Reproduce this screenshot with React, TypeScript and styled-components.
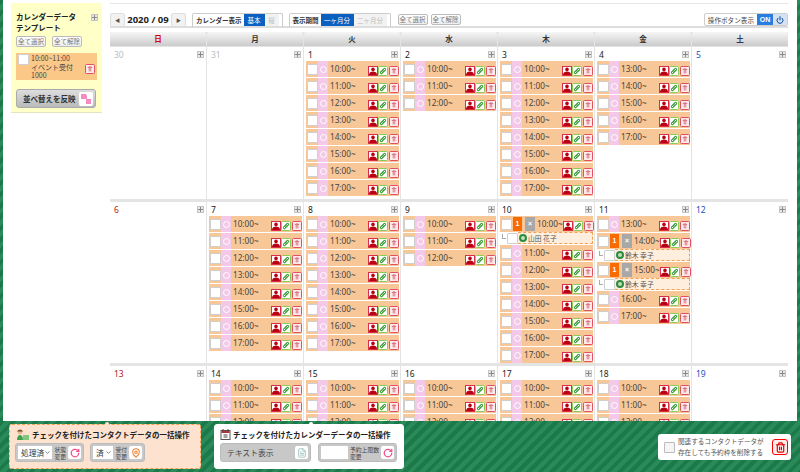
import React from "react";
import styled, { createGlobalStyle } from "styled-components";
import { ChevronDown, FileText, MapPin, Power, RotateCw, Trash2 } from "lucide-react";

const JP = `"Noto Sans CJK JP", "Noto Sans", sans-serif`;

const Global = createGlobalStyle`
  html, body {
    margin: 0;
    height: 472px;
    overflow: hidden;
    font-family: ${JP};
    color: #333;
  }
  * { box-sizing: border-box; }
`;

const Page = styled.div`
  position: relative;
  width: 800px;
  height: 472px;
  overflow: hidden;
  padding: 0 3px;
  background: repeating-linear-gradient(135deg, #1c7a4a 0 4px, #2b8a5a 4px 8px);
`;
const Main = styled.div`
  display: flex;
  align-items: flex-start;
  gap: 8px;
  height: 421px;
  overflow: hidden;
  padding: 3px 10px 0 8px;
  background: #fff;
`;

/* sidebar */
const Side = styled.aside`
  flex: 0 0 90px;
  height: 110px;
  padding: 8px 5px 0;
  background: #ffffc8;
  border-bottom: 1px solid #e4e4c0;
  position: relative;
`;
const SideTitle = styled.div`
  font-size: 7.5px;
  font-weight: 700;
  line-height: 11px;
  color: #222;
  white-space: nowrap;
`;
const SideButtons = styled.div`
  display: flex;
  gap: 6px;
  margin-top: 3px;
`;
const SmallButton = styled.button`
  width: 30px;
  height: 11px;
  padding: 0;
  border: 1px solid #bbb;
  border-radius: 2px;
  background: linear-gradient(#fff, #eee);
  color: #777;
  font: 6.5px/9px ${JP};
`;
const Template = styled.div`
  display: flex;
  gap: 2px;
  margin: 6px 0 0;
  width: 81px;
  height: 27px;
  padding: 1px;
  background: #fcc888;
  position: relative;
`;
const TemplateText = styled.div`
  font-size: 7px;
  line-height: 8.5px;
  white-space: nowrap;
  color: #444;
`;
const TemplateTrash = styled.span`
  position: absolute;
  top: 2px;
  right: 2px;
`;
const Reflect = styled.div`
  display: flex;
  align-items: center;
  justify-content: space-between;
  width: 80px;
  height: 19px;
  margin-top: 9px;
  padding: 0 2px 0 6px;
  border: 1px solid #aaa;
  border-radius: 3px;
  background: linear-gradient(#ddd, #bbb);
  font-size: 7.5px;
  font-weight: 700;
  color: #333;
`;
const ReflectIcon = styled.span`
  display: flex;
  align-items: center;
  justify-content: center;
  width: 14px;
  height: 14px;
  border-radius: 2px;
  background: #fff;
`;
const Plus = styled.span`
  display: inline-block;
  width: 7px;
  height: 7px;
  border: 1px solid #c4c4c4;
  background: linear-gradient(#888, #888) center/5px 1px no-repeat,
    linear-gradient(#888, #888) center/1px 5px no-repeat, #e8e8e8;
  flex: none;
`;
const SidePlus = styled(Plus)`
  position: absolute;
  top: 11px;
  right: 4px;
`;

/* calendar */
const Calendar = styled.main`
  width: 678px;
  flex: none;
  border-top: 1px solid #e6e6e6;
`;
const Toolbar = styled.div`
  display: flex;
  align-items: center;
  height: 24px;
  padding-top: 9px;
  border-bottom: 2px solid #ddd;
`;
const NavBox = styled.span`
  display: flex;
  align-items: center;
  justify-content: center;
  width: 15px;
  height: 14px;
  border: 1px solid #ddd;
  border-radius: 2px;
  background: #f2f2f2;
  color: #555;
  font-size: 5px;
`;
const Month = styled.span`
  width: 46px;
  text-align: center;
  font: 700 9.5px/14px "Noto Sans", sans-serif;
  color: #222;
  white-space: nowrap;
`;
const Group = styled.div`
  display: flex;
  align-items: center;
  gap: 2px;
  height: 14px;
  margin-left: 6px;
  padding: 0 3px;
  border: 1px solid #ccc;
  border-bottom: 0;
  border-radius: 2px 2px 0 0;
  font-size: 6.5px;
  font-weight: 700;
  color: #333;
  white-space: nowrap;
`;
const Seg = styled.span<{ $on?: boolean; $w: number }>`
  width: ${(p) => p.$w}px;
  height: 12px;
  text-align: center;
  font: 400 6.5px/12px ${JP};
  color: ${(p) => (p.$on ? "#fff" : "#bbb")};
  background: ${(p) => (p.$on ? "#0a60c0" : "#f2f2f2")};
`;
const Segs = styled.div`
  display: flex;
`;
const ToolButtons = styled.div`
  display: flex;
  gap: 3px;
  margin-left: 7px;
`;
const Toggle = styled.div`
  display: flex;
  align-items: center;
  height: 13px;
  margin-left: auto;
  padding-left: 3px;
  border: 1px solid #ccc;
  border-radius: 2px;
  font-size: 6.6px;
  color: #444;
  white-space: nowrap;
`;
const ToggleOn = styled.span`
  width: 16px;
  height: 11px;
  margin-left: 3px;
  text-align: center;
  background: #2a7de0;
  color: #fff;
  font: 700 7px/11px "Liberation Sans", sans-serif;
`;
const TogglePower = styled.span`
  display: flex;
  align-items: center;
  justify-content: center;
  width: 14px;
  height: 11px;
  background: #d5e2f2;
  color: #0a50a0;
`;
const Grid = styled.div`
  display: grid;
  grid-template-columns: repeat(7, 96px);
  grid-template-rows: 15px 149px 161px auto;
  column-gap: 1px;
  row-gap: 3px;
  margin-top: 4px;
  background: #e4e4e4;
`;
const Head = styled.div<{ $c: string }>`
  height: 14px;
  border-radius: 2px 2px 0 0;
  background: linear-gradient(#f6f6f6, #cbcbcb);
  text-align: center;
  font: 700 7.5px/14px ${JP};
  color: ${(p) => p.$c};
`;
const Cell = styled.div`
  padding: 0 1px 0 2px;
  background: #fff;
  min-width: 0;
`;
const FirstWeek = styled(Cell)`
  margin-top: -3px;
`;
const DateRow = styled.div`
  display: flex;
  align-items: center;
  justify-content: space-between;
  height: 14px;
  padding: 0 1px 0 2px;
`;
const DateNum = styled.span<{ $c: string }>`
  font: 8.5px/11px "Noto Sans", sans-serif;
  color: ${(p) => p.$c};
`;
const Slot = styled.div`
  display: flex;
  align-items: center;
  width: 93px;
  height: 16px;
  margin-bottom: 1px;
  background: #f8c797;
`;
const Check = styled.span`
  flex: none;
  display: block;
  width: 11px;
  height: 11px;
  margin-left: 1px;
  border: 1px solid #cfcfcf;
  border-radius: 1px;
  background: #fff;
`;
const PinkStrip = styled.span`
  flex: none;
  display: flex;
  align-items: center;
  justify-content: center;
  width: 10px;
  height: 16px;
  background: #f3c8e8;
  &::after {
    content: "";
    width: 5px;
    height: 5px;
    border: 1px solid #fff;
    border-radius: 50%;
  }
`;
const Badge = styled.span`
  flex: none;
  width: 9px;
  height: 14px;
  margin-left: 1px;
  text-align: center;
  background: #f96a00;
  color: #fff;
  font: 700 7px/13px "Liberation Sans", sans-serif;
`;
const Gray = styled.span`
  flex: none;
  width: 10px;
  height: 14px;
  margin-left: 3px;
  text-align: center;
  background: #a8a8a8;
  color: #fff;
  font: 700 7px/14px "Liberation Sans", sans-serif;
`;
const Time = styled.span`
  margin-left: 2px;
  font: 8.2px/14px "Noto Sans", sans-serif;
  color: #444;
  white-space: nowrap;
`;
const Tools = styled.span`
  display: flex;
  gap: 0.5px;
  margin-left: auto;
  padding-right: 0.5px;
  align-self: flex-end;
  padding-bottom: 1px;
`;
const Sub = styled.div`
  display: flex;
  align-items: center;
  width: 93px;
  height: 12px;
  margin-bottom: 1px;
  margin-top: -1px;
  padding-left: 7px;
`;
const SubMark = styled.span`
  flex: none;
  width: 4px;
  height: 5px;
  margin: -4px 0 0 -5px;
  border-left: 1px solid #aaa;
  border-bottom: 1px solid #aaa;
`;
const SubBody = styled.span`
  flex: 1;
  display: flex;
  align-items: center;
  gap: 1px;
  height: 12px;
  padding-left: 1px;
  border: 1px dashed #f5a050;
  border-width: 1px 1px 1px 0;
  background: #feeedd;
  font-size: 6.8px;
  color: #555;
  white-space: nowrap;
`;
const Dot = styled.span`
  flex: none;
  width: 8px;
  height: 8px;
  border: 2px solid #2e8a3c;
  border-radius: 50%;
  background: #bfe0c0;
`;

/* bottom bar */
const Bar = styled.div`
  position: absolute;
  left: 0;
  right: 0;
  bottom: 0;
  display: flex;
  align-items: flex-start;
  gap: 13px;
  height: 51px;
  padding: 3px 9px 0;
  background: repeating-linear-gradient(135deg, #1c7a4a 0 4px, #2b8a5a 4px 8px);
`;
const Panel = styled.section<{ $w: number; $peach?: boolean }>`
  position: relative;
  width: ${(p) => p.$w}px;
  height: 45px;
  padding: 3px 5px;
  border-radius: 3px;
  background: ${(p) => (p.$peach ? "#fde3cf" : "#fff")};
  border: ${(p) => (p.$peach ? "1px dashed #f5a050" : "1px solid #fff")};
  &::before {
    content: "";
    position: absolute;
    top: -3px;
    left: 50%;
    width: 4px;
    height: 4px;
    border-radius: 50%;
    background: ${(p) => (p.$peach ? "#fde3cf" : "#fff")};
  }
`;
const PanelTitle = styled.div`
  display: flex;
  align-items: center;
  gap: 2px;
  height: 13px;
  font-size: 7.5px;
  font-weight: 700;
  color: #222;
  white-space: nowrap;
`;
const Controls = styled.div`
  display: flex;
  gap: ${(p: { $gap: number }) => p.$gap}px;
  margin-top: 2px;
`;
const Ctrl = styled.div<{ $w: number }>`
  display: flex;
  align-items: center;
  width: ${(p) => p.$w}px;
  height: 19px;
  padding: 2px;
  border: 1px solid #bbb;
  border-radius: 3px;
  background: #c8c8c8;
`;
const Sel = styled.span`
  display: flex;
  align-items: center;
  justify-content: space-between;
  flex: 1;
  height: 13px;
  padding: 0 1px 0 3px;
  background: #fff;
  font-size: 7.8px;
  color: #333;
  white-space: nowrap;
`;
const CtrlLabel = styled.span`
  flex: none;
  padding: 0 2px;
  font-size: 5.8px;
  line-height: 7px;
  color: #444;
  white-space: pre-line;
`;
const CtrlIcon = styled.span`
  flex: none;
  display: flex;
  align-items: center;
  justify-content: center;
  width: 13px;
  height: 13px;
  border-radius: 2px;
  background: #fff;
`;
const TextBtn = styled.span`
  flex: 1;
  padding-left: 4px;
  font-size: 7.8px;
  color: #444;
  white-space: nowrap;
`;
const Blank = styled.span`
  flex: none;
  width: 27px;
  height: 13px;
  background: #fff;
`;
const Bulk = styled.section`
  display: flex;
  align-items: center;
  width: 133px;
  height: 26px;
  margin: 10px 0 0 auto;
  padding: 0 3px 0 6px;
  border-radius: 3px;
  background: #fff;
`;
const BulkCheck = styled.span`
  flex: none;
  width: 11px;
  height: 11px;
  border: 1px solid #bbb;
  border-radius: 1px;
  background: #f5f5f5;
`;
const BulkText = styled.span`
  flex: 1;
  padding-left: 3px;
  font-size: 6.6px;
  line-height: 11px;
  color: #555;
  white-space: pre-line;
`;
const DeleteBtn = styled.span`
  flex: none;
  display: flex;
  align-items: center;
  justify-content: center;
  width: 16px;
  height: 16px;
  margin-left: 3px;
  border: 1px solid #f00;
  border-radius: 3px;
  background: #fee;
  color: #d00;
`;

const PersonIcon = () => (
  <svg width="10" height="10" viewBox="0 0 10 10">
    <rect x=".5" y=".5" width="9" height="9" fill="#fff" stroke="#d8304a" />
    <circle cx="5" cy="3.4" r="1.8" fill="#b80010" />
    <path d="M1 9c0-2.6 2-3.4 4-3.4S9 6.4 9 9z" fill="#b80010" />
  </svg>
);
const LinkIcon = () => (
  <svg width="10" height="10" viewBox="0 0 10 10">
    <rect x=".5" y=".5" width="9" height="9" rx="1" fill="#fff" stroke="#8ccc50" />
    <path d="M3.4 6.6l3.2-3.2" stroke="#40a040" strokeWidth="3" strokeLinecap="round" />
    <path d="M3.2 6.8l1-1M5.8 4.2l1-1" stroke="#fff" strokeWidth="1" strokeLinecap="round" />
  </svg>
);
const TrashIcon = () => (
  <svg width="10" height="10" viewBox="0 0 10 10">
    <rect x=".5" y=".5" width="9" height="9" rx="1" fill="#fdeaea" stroke="#e05060" />
    <path d="M2.8 3.4h4.4" stroke="#c85a6a" strokeWidth=".9" />
    <path d="M3.6 3.8h2.8v3.6H3.6z" fill="#e39aa2" />
    <path d="M4.4 2.6h1.2" stroke="#c85a6a" strokeWidth=".8" />
  </svg>
);
const Icons = () => (
  <Tools>
    <PersonIcon />
    <LinkIcon />
    <TrashIcon />
  </Tools>
);
const BoyIcon = () => (
  <svg width="15" height="12" viewBox="0 0 15 12">
    <circle cx="5" cy="3" r="2.4" fill="#e8b888" />
    <path d="M2 2.5C3 .2 7 .2 8 2.5z" fill="#7a4a20" />
    <path d="M2 11c0-3.6 1.4-5 3-5s3 1.4 3 5z" fill="#40a050" />
    <rect x="8" y="6" width="6" height="5" fill="#80c880" />
  </svg>
);
const CalIcon = () => (
  <svg width="11" height="11" viewBox="0 0 10 11">
    <rect x=".5" y="1.5" width="9" height="9" fill="#fff" stroke="#555" />
    <rect x="1" y="2" width="8" height="2" fill="#a33" />
    <path d="M2.5 0v2M7.5 0v2M3 6h4M3 8h4" stroke="#444" />
  </svg>
);
const SortIcon = () => (
  <svg width="12" height="12" viewBox="0 0 12 12">
    <path d="M1 1h5l1 2v3H1zM6 6h5v5H6z" fill="#f78ac0" />
  </svg>
);

type Booking = { at: string; name: string };
type Day = { n: number; c?: string; from?: number; to?: number; booked?: Booking[] };

const WEEK: { l: string; c: string }[] = [
  { l: "日", c: "#c00" },
  { l: "月", c: "#333" },
  { l: "火", c: "#333" },
  { l: "水", c: "#333" },
  { l: "木", c: "#333" },
  { l: "金", c: "#333" },
  { l: "土", c: "#336" },
];
const DAYS: Day[] = [
  { n: 30, c: "#bbb" },
  { n: 31, c: "#bbb" },
  { n: 1, from: 10, to: 17 },
  { n: 2, from: 10, to: 12 },
  { n: 3, from: 10, to: 17 },
  { n: 4, from: 13, to: 17 },
  { n: 5, c: "#1a50c0" },
  { n: 6, c: "#b02020" },
  { n: 7, from: 10, to: 17 },
  { n: 8, from: 10, to: 17 },
  { n: 9, from: 10, to: 12 },
  { n: 10, from: 10, to: 17, booked: [{ at: "10:00", name: "山田 花子" }] },
  {
    n: 11,
    from: 13,
    to: 17,
    booked: [
      { at: "14:00", name: "鈴木 幸子" },
      { at: "15:00", name: "鈴木 幸子" },
    ],
  },
  { n: 12, c: "#1a50c0" },
  { n: 13, c: "#b02020" },
  { n: 14, from: 10, to: 12 },
  { n: 15, from: 10, to: 12 },
  { n: 16, from: 10, to: 12 },
  { n: 17, from: 10, to: 12 },
  { n: 18, from: 10, to: 12 },
  { n: 19, c: "#1a50c0" },
];

const DayCell = ({ day, first }: { day: Day; first: boolean }) => {
  const hours: string[] = [];
  if (day.from) for (let h = day.from; h <= (day.to as number); h++) hours.push(`${h}:00`);
  const Box = first ? FirstWeek : Cell;
  return (
    <Box>
      <DateRow>
        <DateNum $c={day.c ?? "#222"}>{day.n}</DateNum>
        <Plus />
      </DateRow>
      {hours.map((t) => {
        const b = day.booked?.find((x) => x.at === t);
        return (
          <React.Fragment key={t}>
            <Slot>
              <Check />
              {b ? (
                <>
                  <Badge>1</Badge>
                  <Gray>×</Gray>
                </>
              ) : (
                <PinkStrip />
              )}
              <Time>{t}~</Time>
              <Icons />
            </Slot>
            {b && (
              <Sub>
                <SubMark />
                <Check />
                <SubBody>
                  <Dot />
                  {b.name}
                </SubBody>
              </Sub>
            )}
          </React.Fragment>
        );
      })}
    </Box>
  );
};

export default function App() {
  return (
    <Page>
      <Global />
      <Main>
        <Side>
          <SidePlus />
          <SideTitle>
            カレンダーデータ
            <br />
            テンプレート
          </SideTitle>
          <SideButtons>
            <SmallButton>全て選択</SmallButton>
            <SmallButton>全て解除</SmallButton>
          </SideButtons>
          <Template>
            <Check />
            <TemplateText>
              10:00~11:00
              <br />
              イベント受付
              <br />
              1000
            </TemplateText>
            <TemplateTrash>
              <TrashIcon />
            </TemplateTrash>
          </Template>
          <Reflect>
            並べ替えを反映
            <ReflectIcon>
              <SortIcon />
            </ReflectIcon>
          </Reflect>
        </Side>
        <Calendar>
          <Toolbar>
            <NavBox>◀</NavBox>
            <Month>2020 / 09</Month>
            <NavBox>▶</NavBox>
            <Group>
              カレンダー表示
              <Segs>
                <Seg $on $w={21}>基本</Seg>
                <Seg $w={14}>桜</Seg>
              </Segs>
            </Group>
            <Group>
              表示期間
              <Segs>
                <Seg $on $w={33}>一ヶ月分</Seg>
                <Seg $w={33}>二ヶ月分</Seg>
              </Segs>
            </Group>
            <ToolButtons>
              <SmallButton>全て選択</SmallButton>
              <SmallButton>全て解除</SmallButton>
            </ToolButtons>
            <Toggle>
              操作ボタン表示
              <ToggleOn>ON</ToggleOn>
              <TogglePower>
                <Power size={8} strokeWidth={3} />
              </TogglePower>
            </Toggle>
          </Toolbar>
          <Grid>
            {WEEK.map((d) => (
              <Head key={d.l} $c={d.c}>{d.l}</Head>
            ))}
            {DAYS.map((d, i) => (
              <DayCell key={d.n} day={d} first={i < 7} />
            ))}
          </Grid>
        </Calendar>
      </Main>
      <Bar>
        <Panel $w={192} $peach>
          <PanelTitle>
            <BoyIcon />
            チェックを付けたコンタクトデータの一括操作
          </PanelTitle>
          <Controls $gap={6}>
            <Ctrl $w={69}>
              <Sel>
                処理済
                <ChevronDown size={7} />
              </Sel>
              <CtrlLabel>{"状態\n変更"}</CtrlLabel>
              <CtrlIcon>
                <RotateCw size={10} color="#f0508c" strokeWidth={3} />
              </CtrlIcon>
            </Ctrl>
            <Ctrl $w={55}>
              <Sel>
                済
                <ChevronDown size={7} />
              </Sel>
              <CtrlLabel>{"受付\n変更"}</CtrlLabel>
              <CtrlIcon>
                <MapPin size={10} color="#f08030" strokeWidth={2.5} />
              </CtrlIcon>
            </Ctrl>
          </Controls>
        </Panel>
        <Panel $w={190}>
          <PanelTitle>
            <CalIcon />
            チェックを付けたカレンダーデータの一括操作
          </PanelTitle>
          <Controls $gap={7}>
            <Ctrl $w={91}>
              <TextBtn>テキスト表示</TextBtn>
              <CtrlIcon>
                <FileText size={10} color="#9bb" />
              </CtrlIcon>
            </Ctrl>
            <Ctrl $w={79}>
              <Blank />
              <CtrlLabel>{"予約上限数\n変更"}</CtrlLabel>
              <CtrlIcon>
                <RotateCw size={10} color="#f0508c" strokeWidth={3} />
              </CtrlIcon>
            </Ctrl>
          </Controls>
        </Panel>
        <Bulk>
          <BulkCheck />
          <BulkText>{"関連するコンタクトデータが\n存在しても予約枠を削除する"}</BulkText>
          <DeleteBtn>
            <Trash2 size={11} strokeWidth={2.5} />
          </DeleteBtn>
        </Bulk>
      </Bar>
    </Page>
  );
}
